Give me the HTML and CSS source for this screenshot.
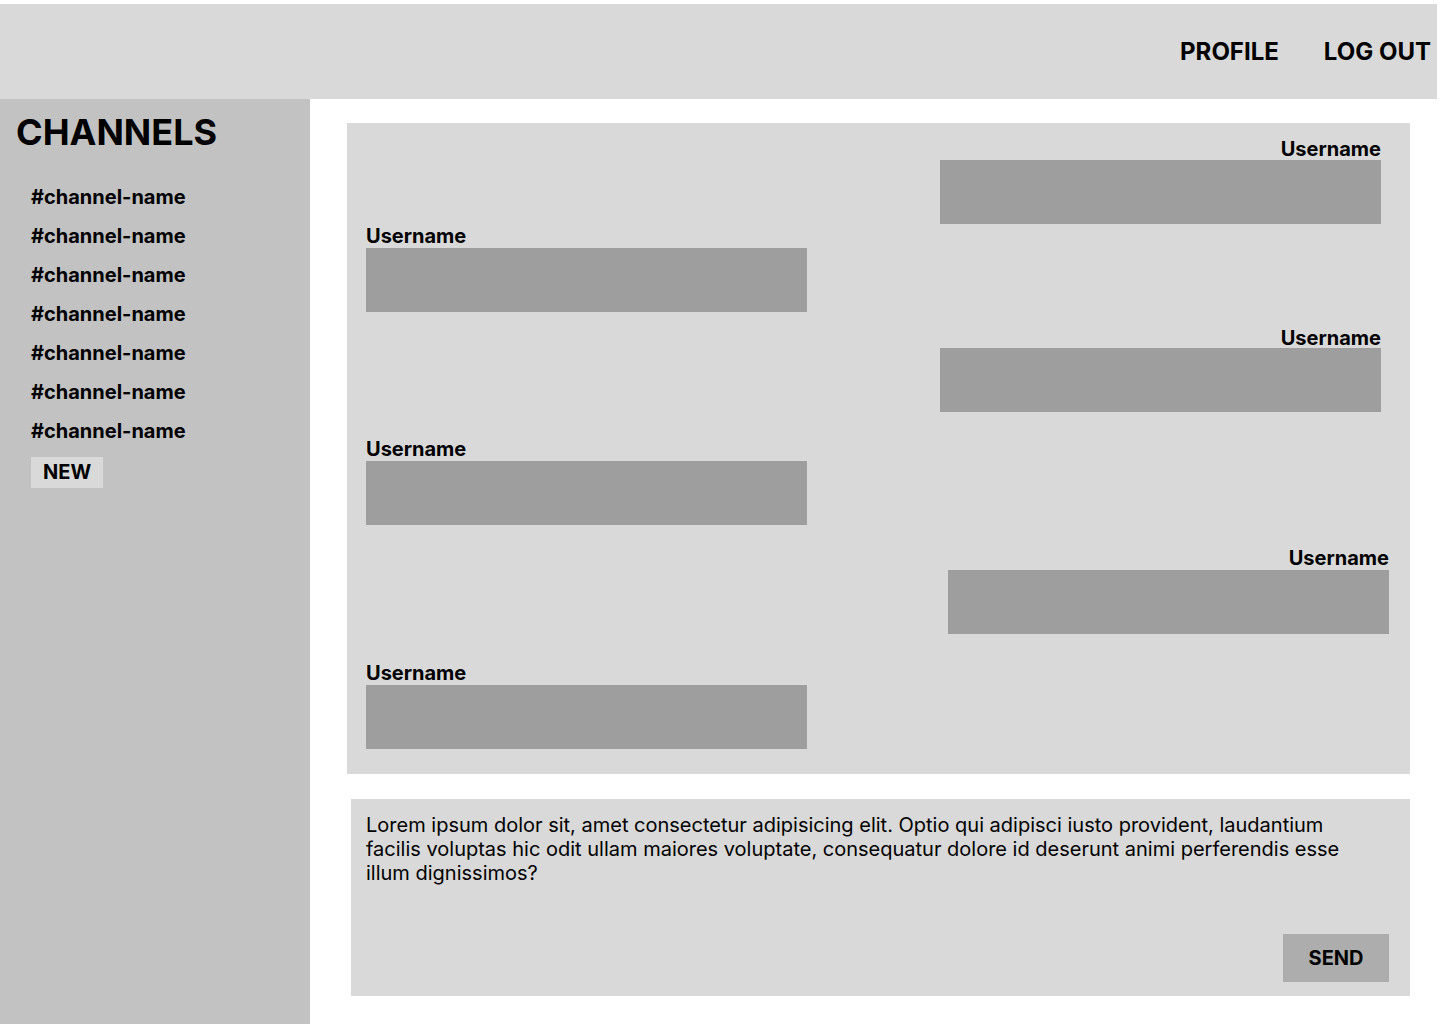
FILE: index.html
```html
<!DOCTYPE html>
<html lang="en">
<head>
    <meta charset="UTF-8">
    <meta name="viewport" content="width=device-width, initial-scale=1.0">
    <title>Chat</title>
    <link rel="stylesheet" href="styles.css">
</head>
<body>
    <header class="topbar">
        <a class="nav-link" href="#">PROFILE</a>
        <a class="nav-link" href="#">LOG OUT</a>
    </header>

    <div class="layout">
        <aside class="sidebar">
            <h1 class="sidebar-title">CHANNELS</h1>
            <ul class="channels">
                <li>#channel-name</li>
                <li>#channel-name</li>
                <li>#channel-name</li>
                <li>#channel-name</li>
                <li>#channel-name</li>
                <li>#channel-name</li>
                <li>#channel-name</li>
            </ul>
            <button class="btn-new">NEW</button>
        </aside>

        <main class="main">
            <section class="chat">
                <div class="msg mine">
                    <div class="msg-user">Username</div>
                    <div class="msg-body"></div>
                </div>
                <div class="msg">
                    <div class="msg-user">Username</div>
                    <div class="msg-body"></div>
                </div>
                <div class="msg mine">
                    <div class="msg-user">Username</div>
                    <div class="msg-body"></div>
                </div>
                <div class="msg">
                    <div class="msg-user">Username</div>
                    <div class="msg-body"></div>
                </div>
                <div class="msg mine shifted">
                    <div class="msg-user">Username</div>
                    <div class="msg-body"></div>
                </div>
                <div class="msg">
                    <div class="msg-user">Username</div>
                    <div class="msg-body"></div>
                </div>
            </section>

            <form class="composer">
                <p class="composer-text">Lorem ipsum dolor sit, amet consectetur adipisicing elit. Optio qui adipisci iusto provident, laudantium facilis voluptas hic odit ullam maiores voluptate, consequatur dolore id deserunt animi perferendis esse illum dignissimos?</p>
                <button class="btn-send" type="button">SEND</button>
            </form>
        </main>
    </div>
</body>
</html>
```

FILE: styles.css
```css
/* General */
* {
    margin: 0;
    padding: 0;
    box-sizing: border-box;
}

body {
    font-family: Inter, "Noto Sans", sans-serif;
    color: #000;
    background-color: #fff;
    padding-top: 4px;
    height: 1024px;
    overflow: hidden;
}

/* Top bar */
.topbar {
    width: 1437px;
    height: 95px;
    background-color: #d9d9d9;
    display: flex;
    justify-content: flex-end;
    align-items: center;
    gap: 45px;
    padding-right: 6px;
}

.nav-link {
    color: #000;
    text-decoration: none;
    font-size: 24px;
    font-weight: 700;
}

/* Layout */
.layout {
    display: flex;
    height: 925px;
}

/* Sidebar */
.sidebar {
    width: 310px;
    background-color: #c2c2c2;
    padding: 11px 0 0 16px;
}

.sidebar-title {
    font-size: 36px;
    font-weight: 700;
    line-height: 44px;
}

.channels {
    list-style: none;
    margin-top: 24px;
    padding-left: 15px;
}

.channels li {
    font-size: 20px;
    font-weight: 700;
    line-height: 39px;
}

.btn-new {
    margin: 6px 0 0 15px;
    background-color: #d9d9d9;
    border: none;
    font-family: inherit;
    font-size: 20px;
    font-weight: 700;
    line-height: 31px;
    padding: 0 12px;
    color: #000;
}

/* Main */
.main {
    flex: 1;
    padding: 24px 0 0 37px;
}

.chat {
    width: 1063px;
    height: 651px;
    background-color: #d9d9d9;
    padding: 13px 29px 0 19px;
    display: flex;
    flex-direction: column;
}

.msg {
    width: 441px;
}

.msg.mine {
    align-self: flex-end;
    text-align: right;
}

.msg.shifted {
    margin-right: -8px;
}

.msg:nth-child(1) .msg-user { margin-top: 1px; margin-bottom: -1px; }
.msg:nth-child(3) { margin-top: 14px; }
.msg:nth-child(3) .msg-user { margin-bottom: -2px; }
.msg:nth-child(4) { margin-top: 25px; }
.msg:nth-child(5) { margin-top: 21px; }
.msg:nth-child(6) { margin-top: 27px; }

.msg-user {
    font-size: 20px;
    font-weight: 700;
    line-height: 24px;
}

.msg-body {
    height: 64px;
    background-color: #9e9e9e;
}

/* Composer */
.composer {
    width: 1059px;
    height: 197px;
    margin: 25px 0 0 4px;
    background-color: #d9d9d9;
    padding: 14px 21px 14px 15px;
    display: flex;
    flex-direction: column;
    justify-content: space-between;
}

.composer-text {
    font-size: 20px;
    line-height: 24px;
    max-width: 990px;
}

.btn-send {
    align-self: flex-end;
    width: 106px;
    height: 48px;
    background-color: #adadad;
    border: none;
    font-family: inherit;
    font-size: 20px;
    font-weight: 700;
    color: #000;
}
```
